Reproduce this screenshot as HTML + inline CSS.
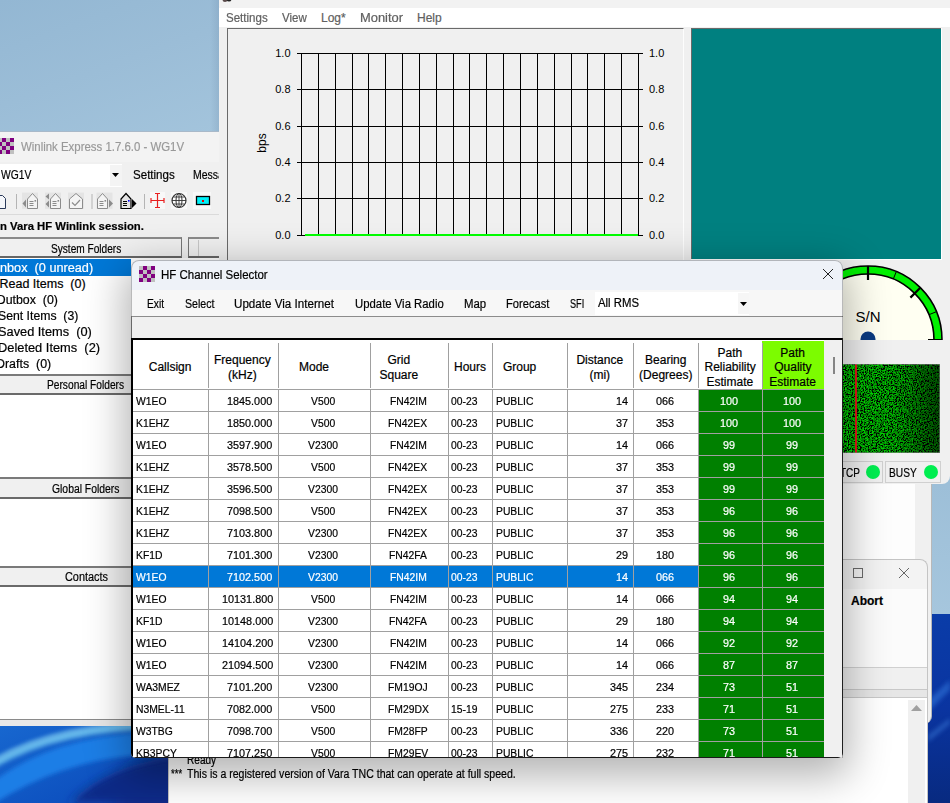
<!DOCTYPE html>
<html><head><meta charset="utf-8">
<style>
*{margin:0;padding:0;box-sizing:border-box}
html,body{width:950px;height:803px;overflow:hidden;background:#9cbfd8;font-family:"Liberation Sans",sans-serif;font-size:12px;color:#000}
body{position:relative}
.a{position:absolute}
.t{position:absolute;white-space:nowrap;-webkit-text-stroke:0.2px currentColor}
</style></head><body>
<div class="a" style="left:0;top:0;width:219px;height:132px;background:linear-gradient(160deg,#93b7d3 0%,#9bbdd7 50%,#a3c4dc 100%)"></div><div class="a" style="left:210px;top:0;width:9px;height:132px;background:linear-gradient(90deg,rgba(120,150,180,0),rgba(110,140,170,.25))"></div><div class="a" style="left:932px;top:484px;width:18px;height:132px;background:linear-gradient(180deg,#9dbfd8,#a6c6dd)"></div><svg class="a" style="left:0;top:720px" width="175" height="83" viewBox="0 720 175 83"><defs><filter id="b1" x="-50%" y="-50%" width="200%" height="200%"><feGaussianBlur stdDeviation="2"/></filter><filter id="b2" x="-50%" y="-50%" width="200%" height="200%"><feGaussianBlur stdDeviation="9"/></filter><filter id="b3l" x="-50%" y="-50%" width="200%" height="200%"><feGaussianBlur stdDeviation="4"/></filter><linearGradient id="bg1" x1="0" y1="0" x2="1" y2="1"><stop offset="0" stop-color="#1868d0"/><stop offset="1" stop-color="#0846b8"/></linearGradient></defs><rect x="0" y="720" width="175" height="83" fill="url(#bg1)"/><path d="M40 720 Q140 720 175 726 V720Z" fill="#0a3c9c" filter="url(#b1)"/><path d="M-10 784 Q60 729 180 732 V756 Q80 748 -10 806Z" fill="#1c7ee6" filter="url(#b1)"/><path d="M-10 766 Q60 723 180 726" stroke="#62b6ea" stroke-width="8" fill="none" filter="url(#b1)"/><path d="M-10 762 Q60 720 180 723" stroke="#8fd0f4" stroke-width="2" fill="none" opacity=".6" filter="url(#b1)"/><ellipse cx="185" cy="805" rx="70" ry="50" fill="#0a2c8a" filter="url(#b2)"/><path d="M70 803 Q105 764 180 756 V803Z" fill="#0a2a88" filter="url(#b3l)"/><path d="M70 803 Q105 764 180 756" stroke="#3a78d0" stroke-width="1.2" fill="none" opacity=".5" filter="url(#b1)"/></svg><svg class="a" style="left:928px;top:614px" width="22" height="189" viewBox="928 614 22 189"><defs><filter id="b3"><feGaussianBlur stdDeviation="2"/></filter></defs><defs><linearGradient id="rg" x1="0" y1="0" x2="0" y2="1"><stop offset="0" stop-color="#0a3ca8"/><stop offset=".5" stop-color="#0a34a0"/><stop offset="1" stop-color="#082a80"/></linearGradient></defs><rect x="928" y="614" width="22" height="189" fill="url(#rg)"/><path d="M928 700 L950 680 V690 L928 712Z" fill="#2a6ad0" opacity=".7" filter="url(#b3)"/><path d="M928 735 L950 718 V724 L928 742Z" fill="#3a7ad8" opacity=".5" filter="url(#b3)"/></svg><div class="a" style="left:600px;top:470px;width:332px;height:254px;background:#f0f0f0;border-right:1px solid #b8b8b8;border-radius:0 0 8px 0"></div><div class="a" style="left:843px;top:484px;width:72px;height:75px;background:#fdfdfd;"></div><div class="a" style="left:168px;top:559px;width:760px;height:244px;background:#f0f0f0;border-radius:0 8px 0 0;overflow:hidden"><div class="a" style="left:0px;top:0px;width:760px;height:30px;background:#f3f3f3;"></div><div class="a" style="left:685px;top:9px;width:10px;height:10px;background:transparent;border:1px solid #6a6a6a"></div><svg class="a" style="left:730px;top:8px" width="12" height="12"><path d="M1 1L11 11M11 1L1 11" stroke="#666" stroke-width="1"/></svg><div class="a" style="left:0px;top:30px;width:760px;height:78px;background:#fbfbfb;"></div><div class="t" style="left:683.00px;top:31.84px;font-size:12px;line-height:20px;color:#000;font-weight:bold;">Abort</div><div class="a" style="left:0px;top:108px;width:760px;height:1px;background:#d0d0d0;"></div><div class="a" style="left:0px;top:130px;width:760px;height:9px;background:#e6e6e6;border-top:1px solid #c8c8c8;border-bottom:1px solid #c8c8c8"></div><div class="a" style="left:0px;top:139px;width:760px;height:105px;background:#fff;"></div><div class="a" style="left:740px;top:141px;width:17px;height:103px;background:#f0f0f0;"></div><svg class="a" style="left:743px;top:145px" width="11" height="8"><path d="M0 7L5.5 1L11 7Z" fill="#a0a0a0"/></svg><div class="t" style="left:18.60px;top:191.04px;font-size:12px;line-height:20px;color:#000;transform:scaleX(0.8400);transform-origin:0 0;">Ready</div><div class="t" style="left:3.30px;top:204.74px;font-size:12px;line-height:20px;color:#000;transform:scaleX(0.7929);transform-origin:0 0;">***</div><div class="t" style="left:19.10px;top:204.74px;font-size:12px;line-height:20px;color:#000;transform:scaleX(0.8797);transform-origin:0 0;">This is a registered version of Vara TNC that can operate at full speed.</div></div><div class="a" style="left:168px;top:559px;width:760px;height:244px;border:1px solid #c4c4c4;border-bottom:none;border-radius:0 8px 0 0"></div><div class="a" style="left:0;top:131px;width:219px;height:595px;background:#f0f0f0;overflow:hidden"><div class="a" style="left:0px;top:0px;width:219px;height:1px;background:#a9b9c9;"></div><div class="a" style="left:0px;top:1px;width:219px;height:30px;background:#f3f3f3;"></div><div class="a" style="left:-2px;top:7px;width:4px;height:4px;background:#c0c0c0;"></div><div class="a" style="left:2px;top:7px;width:4px;height:4px;background:#800080;"></div><div class="a" style="left:6px;top:7px;width:4px;height:4px;background:#c0c0c0;"></div><div class="a" style="left:10px;top:7px;width:4px;height:4px;background:#800080;"></div><div class="a" style="left:-2px;top:11px;width:4px;height:4px;background:#800080;"></div><div class="a" style="left:2px;top:11px;width:4px;height:4px;background:#c0c0c0;"></div><div class="a" style="left:6px;top:11px;width:4px;height:4px;background:#800080;"></div><div class="a" style="left:10px;top:11px;width:4px;height:4px;background:#c0c0c0;"></div><div class="a" style="left:-2px;top:15px;width:4px;height:4px;background:#c0c0c0;"></div><div class="a" style="left:2px;top:15px;width:4px;height:4px;background:#800080;"></div><div class="a" style="left:6px;top:15px;width:4px;height:4px;background:#c0c0c0;"></div><div class="a" style="left:10px;top:15px;width:4px;height:4px;background:#800080;"></div><div class="a" style="left:-2px;top:19px;width:4px;height:4px;background:#800080;"></div><div class="a" style="left:2px;top:19px;width:4px;height:4px;background:#c0c0c0;"></div><div class="a" style="left:6px;top:19px;width:4px;height:4px;background:#800080;"></div><div class="a" style="left:10px;top:19px;width:4px;height:4px;background:#c0c0c0;"></div><div class="t" style="left:20.50px;top:5.67px;font-size:12.5px;line-height:20px;color:#999;transform:scaleX(0.9134);transform-origin:0 0;">Winlink Express 1.7.6.0 - WG1V</div><div class="a" style="left:0px;top:33px;width:122px;height:23px;background:#fff;"></div><div class="a" style="left:110px;top:34px;width:12px;height:21px;background:#f4f4f4;"></div><svg class="a" style="left:112px;top:42px" width="7" height="4"><path d="M0 0H7L3.5 4Z" fill="#000"/></svg><div class="t" style="left:0.50px;top:33.67px;font-size:12.5px;line-height:20px;color:#000;transform:scaleX(0.8243);transform-origin:0 0;">WG1V</div><div class="t" style="left:132.60px;top:33.84px;font-size:12px;line-height:20px;color:#000;transform:scaleX(0.9628);transform-origin:0 0;">Settings</div><div class="t" style="left:193.40px;top:33.84px;font-size:12px;line-height:20px;color:#000;transform:scaleX(0.8727);transform-origin:0 0;">Messages</div><div class="a" style="left:0px;top:83px;width:219px;height:1px;background:#dadada;"></div><svg class="a" style="left:0;top:55px" width="219" height="30" viewBox="0 186 219 30"><path d="M-6 195.5H2.5L5.5 198.5V208.5H-6Z" fill="#f4f6fa" stroke="#2a3a5a"/><path d="M16.5 194V209M92 194V209M144.5 194V209" stroke="#b4b4b4"/><rect x="22" y="192.6" width="16" height="16.2" fill="#e4e4e4"/><rect x="45" y="192.6" width="16" height="16.2" fill="#e4e4e4"/><rect x="68" y="192.6" width="16" height="16.2" fill="#e4e4e4"/><rect x="96.5" y="192.6" width="16" height="16.2" fill="#e4e4e4"/><path d="M27.5 208.5V199L32.5 193.5L37.5 199V208.5Z" fill="#f4f4f4" stroke="#8c8c8c" stroke-width="1"/><path d="M29.5 201.5h4M29.5 203.5h4M29.5 205.5h4" stroke="#8c8c8c"/><rect x="34.5" y="200" width="1.6" height="1.6" fill="#8c8c8c"/><path d="M22.5 203.5L26 199.5V207.5Z" fill="#8c8c8c"/><path d="M50.5 208.5V199L55.5 193.5L60.5 199V208.5Z" fill="#f4f4f4" stroke="#8c8c8c" stroke-width="1"/><path d="M52.5 201.5h4M52.5 203.5h4M52.5 205.5h4" stroke="#8c8c8c"/><rect x="57.5" y="200" width="1.6" height="1.6" fill="#8c8c8c"/><path d="M45.5 196.5L49 193.5V199.5Z M45.5 204L49 200.5V207.5Z" fill="#8c8c8c"/><path d="M69.5 208.5V199L76 193.5L82.5 199V208.5Z" fill="#f4f4f4" stroke="#8c8c8c"/><path d="M72 202.5L75 205.5L80 200" fill="none" stroke="#8c8c8c" stroke-width="1.2"/><path d="M97.5 208.5V199L102.5 193.5L107.5 199V208.5Z" fill="#f4f4f4" stroke="#8c8c8c" stroke-width="1"/><path d="M99.5 201.5h4M99.5 203.5h4M99.5 205.5h4" stroke="#8c8c8c"/><rect x="104.5" y="200" width="1.6" height="1.6" fill="#8c8c8c"/><path d="M113 203.5L109 199.5V207.5Z" fill="#8c8c8c"/><path d="M121 208.5V199L126.0 193.5L131 199V208.5Z" fill="#e4e4e4" stroke="#000" stroke-width="1.2"/><path d="M123 201.5h4M123 203.5h4M123 205.5h4" stroke="#000"/><rect x="128" y="200" width="1.6" height="1.6" fill="#0000ff"/><path d="M136.5 203.5L132 199V208Z" fill="#000"/><rect x="150" y="192" width="15" height="17" fill="#f8f8f8"/><path d="M157.5 193V208M150.5 200.5H164.5M155 193.5H160M155 207.5H160M151 198V203M164 198V203" stroke="#e82020" stroke-width="1.2" fill="none"/><rect x="171" y="192" width="16" height="17" fill="#f8f8f8"/><circle cx="179" cy="200.5" r="7" fill="#fff" stroke="#333" stroke-width="1.2"/><ellipse cx="179" cy="200.5" rx="3" ry="7" fill="none" stroke="#333"/><path d="M172 200.5H186M173.5 197H184.5M173.5 204H184.5M179 193.5V207.5" stroke="#333" stroke-width=".9"/><rect x="193" y="192" width="18" height="17" fill="#f8f8f8"/><rect x="196.5" y="196.5" width="13" height="8" fill="#00f0f8" stroke="#000" stroke-width="1.3"/><rect x="202" y="200" width="2" height="2" fill="#e00"/></svg><div class="t" style="left:0.00px;top:85.19px;font-size:11px;line-height:20px;color:#000;font-weight:bold;transform:scaleX(1.0286);transform-origin:0 0;">n Vara HF Winlink session.</div><div class="a" style="left:-2px;top:106px;width:184px;height:21px;background:#f0f0f0;border:1px solid #777;border-top:2px solid #8a8a8a;border-bottom:2px solid #666;border-left:none"></div><div class="t" style="left:51.00px;top:107.84px;font-size:12px;line-height:20px;color:#000;transform:scaleX(0.8434);transform-origin:0 0;">System Folders</div><div class="a" style="left:188px;top:106px;width:40px;height:21px;background:#f0f0f0;border:1px solid #777;border-top:2px solid #8a8a8a;border-bottom:2px solid #666"></div><div class="a" style="left:198px;top:109px;width:1px;height:16px;background:#c8c8c8;"></div><div class="a" style="left:0px;top:127px;width:219px;height:461px;background:#fff;"></div><div class="a" style="left:0px;top:128px;width:131px;height:17px;background:#0078d7;"></div><div class="t" style="left:0.00px;top:127.17px;font-size:12.5px;line-height:20px;color:#fff;transform:scaleX(1.0152);transform-origin:0 0;">nbox&nbsp; (0 unread)</div><div class="t" style="left:-0.50px;top:143.17px;font-size:12.5px;line-height:20px;color:#000;">Read Items&nbsp; (0)</div><div class="t" style="left:-4.00px;top:159.17px;font-size:12.5px;line-height:20px;color:#000;transform:scaleX(0.9905);transform-origin:0 0;">Outbox&nbsp; (0)</div><div class="t" style="left:-2.00px;top:175.17px;font-size:12.5px;line-height:20px;color:#000;transform:scaleX(0.9793);transform-origin:0 0;">Sent Items&nbsp; (3)</div><div class="t" style="left:-2.50px;top:191.17px;font-size:12.5px;line-height:20px;color:#000;transform:scaleX(1.0228);transform-origin:0 0;">Saved Items&nbsp; (0)</div><div class="t" style="left:-2.50px;top:207.17px;font-size:12.5px;line-height:20px;color:#000;transform:scaleX(1.0273);transform-origin:0 0;">Deleted Items&nbsp; (2)</div><div class="t" style="left:-4.50px;top:223.17px;font-size:12.5px;line-height:20px;color:#000;transform:scaleX(0.9946);transform-origin:0 0;">Drafts&nbsp; (0)</div><div class="a" style="left:-2px;top:243px;width:240px;height:21px;background:#f0f0f0;border-top:2px solid #7a7a7a;border-bottom:2px solid #6a6a6a"></div><div class="t" style="left:47.35px;top:243.54px;font-size:12px;line-height:20px;color:#000;transform:scaleX(0.8495);transform-origin:0 0;">Personal Folders</div><div class="a" style="left:-2px;top:346px;width:240px;height:22px;background:#f0f0f0;border-top:2px solid #7a7a7a;border-bottom:2px solid #6a6a6a"></div><div class="t" style="left:52.30px;top:348.04px;font-size:12px;line-height:20px;color:#000;transform:scaleX(0.8641);transform-origin:0 0;">Global Folders</div><div class="a" style="left:-2px;top:435px;width:240px;height:21px;background:#f0f0f0;border-top:2px solid #7a7a7a;border-bottom:2px solid #6a6a6a"></div><div class="t" style="left:64.65px;top:435.84px;font-size:12px;line-height:20px;color:#000;transform:scaleX(0.9085);transform-origin:0 0;">Contacts</div><div class="a" style="left:0px;top:588px;width:219px;height:1px;background:#8a8a8a;"></div><div class="a" style="left:0px;top:589px;width:219px;height:6px;background:#e8e8e8;"></div></div><div class="a" style="left:219px;top:0;width:731px;height:484px;background:#f0f0f0;border-radius:0 0 8px 0;overflow:hidden"><div class="a" style="left:0px;top:0px;width:731px;height:8px;background:#f2f2f2;"></div><div class="a" style="left:0px;top:8px;width:731px;height:19px;background:#fff;"></div><svg class="a" style="left:3px;top:-4px" width="10" height="7"><ellipse cx="3" cy="3.5" rx="2.5" ry="2.5" fill="#5a4a4a"/><ellipse cx="7" cy="3" rx="2.5" ry="2.5" fill="#222"/></svg><div class="t" style="left:7.40px;top:7.54px;font-size:12px;line-height:20px;color:#606060;transform:scaleX(0.9605);transform-origin:0 0;">Settings</div><div class="t" style="left:63.00px;top:7.54px;font-size:12px;line-height:20px;color:#606060;transform:scaleX(0.9615);transform-origin:0 0;">View</div><div class="t" style="left:102.00px;top:7.54px;font-size:12px;line-height:20px;color:#606060;">Log*</div><div class="t" style="left:141.00px;top:7.54px;font-size:12px;line-height:20px;color:#606060;transform:scaleX(1.0750);transform-origin:0 0;">Monitor</div><div class="t" style="left:198.00px;top:7.54px;font-size:12px;line-height:20px;color:#606060;">Help</div><div class="a" style="left:8px;top:28px;width:457px;height:232px;background:transparent;border-top:1px solid #6a6a6a;border-left:1px solid #6a6a6a;border-right:1px solid #fdfdfd"></div><svg class="a" style="left:0;top:0" width="731" height="260" font-family="Liberation Sans"><path d="M78 53.5H424" stroke="#000"/><text x="71.5" y="57" font-size="11" text-anchor="end">1.0</text><text x="430" y="57" font-size="11">1.0</text><path d="M78 89.5H424" stroke="#000"/><text x="71.5" y="93" font-size="11" text-anchor="end">0.8</text><text x="430" y="93" font-size="11">0.8</text><path d="M78 126.5H424" stroke="#000"/><text x="71.5" y="130" font-size="11" text-anchor="end">0.6</text><text x="430" y="130" font-size="11">0.6</text><path d="M78 162.5H424" stroke="#000"/><text x="71.5" y="166" font-size="11" text-anchor="end">0.4</text><text x="430" y="166" font-size="11">0.4</text><path d="M78 198.5H424" stroke="#000"/><text x="71.5" y="202" font-size="11" text-anchor="end">0.2</text><text x="430" y="202" font-size="11">0.2</text><path d="M78 235.5H424" stroke="#000"/><text x="71.5" y="239" font-size="11" text-anchor="end">0.0</text><text x="430" y="239" font-size="11">0.0</text><path d="M82.5 53V236" stroke="#000"/><path d="M99.5 53V236" stroke="#000"/><path d="M116.5 53V236" stroke="#000"/><path d="M133.5 53V236" stroke="#000"/><path d="M149.5 53V236" stroke="#000"/><path d="M166.5 53V236" stroke="#000"/><path d="M183.5 53V236" stroke="#000"/><path d="M200.5 53V236" stroke="#000"/><path d="M217.5 53V236" stroke="#000"/><path d="M234.5 53V236" stroke="#000"/><path d="M250.5 53V236" stroke="#000"/><path d="M267.5 53V236" stroke="#000"/><path d="M284.5 53V236" stroke="#000"/><path d="M301.5 53V236" stroke="#000"/><path d="M318.5 53V236" stroke="#000"/><path d="M335.5 53V236" stroke="#000"/><path d="M352.5 53V236" stroke="#000"/><path d="M368.5 53V236" stroke="#000"/><path d="M385.5 53V236" stroke="#000"/><path d="M402.5 53V236" stroke="#000"/><path d="M419.5 53V236" stroke="#000"/><path d="M86 235H419" stroke="#00ff00" stroke-width="2"/><text transform="translate(46.5,143) rotate(-90)" font-size="12" text-anchor="middle">bps</text></svg><div class="a" style="left:472px;top:28px;width:251px;height:232px;background:#008080;border-top:1px solid #6a6a6a;border-left:1px solid #6a6a6a"></div><div class="a" style="left:722px;top:28px;width:1px;height:232px;background:#fff;"></div><div class="a" style="left:472px;top:259px;width:251px;height:1px;background:#fff;"></div><div class="a" style="left:576px;top:262px;width:151px;height:78px;overflow:hidden"><svg width="151" height="78" font-family="Liberation Sans"><g transform="translate(73,78)"><circle r="74" fill="#fffff2"/><path d="M-74 0A74 74 0 0 1 74 0H66A66 66 0 0 0 -66 0Z" fill="#00f000" stroke="#000" stroke-width="1.6"/><path d="M0 -74V-60M52.3 -52.3L42.4 -42.4M74 0H60" stroke="#000" stroke-width="2.2"/><path d="M28.3 -68.4L25.3 -61M68.4 -28.3L61 -25.3" stroke="#000" stroke-width="1"/><circle cx="0" cy="-1" r="7.5" fill="#0a3a80"/></g><text x="73" y="60" font-size="15" text-anchor="middle">S/N</text></svg></div><svg class="a" style="left:620px;top:364px" width="101" height="89"><defs><filter id="nz" x="0" y="0" width="100%" height="100%"><feTurbulence type="fractalNoise" baseFrequency="0.75" numOctaves="2" seed="4"/><feColorMatrix type="matrix" values="0 0 0 0 0  2.6 0 0 0 -1.0  0 0 0 0 0  0 0 0 0 1"/></filter><linearGradient id="wg" x1="0" x2="1"><stop offset="0" stop-color="#000" stop-opacity="0"/><stop offset=".55" stop-color="#000" stop-opacity=".15"/><stop offset="1" stop-color="#000" stop-opacity=".6"/></linearGradient></defs><rect width="101" height="89" fill="#000"/><rect width="101" height="89" filter="url(#nz)"/><rect width="101" height="89" fill="url(#wg)"/><rect x="16" y="0" width="2" height="89" fill="#e01818"/><rect x="0" y="0" width="101" height="89" fill="none" stroke="#909090"/></svg><div class="a" style="left:611px;top:461px;width:53px;height:22px;background:transparent;border:1px solid #d0d0d0"></div><div class="t" style="left:620.50px;top:462.84px;font-size:12px;line-height:20px;color:#000;transform:scaleX(0.8333);transform-origin:0 0;">TCP</div><div class="a" style="left:647px;top:465px;width:14px;height:14px;border-radius:50%;background:#00ee50"></div><div class="a" style="left:666px;top:461px;width:56px;height:22px;background:transparent;border:1px solid #d0d0d0"></div><div class="t" style="left:670.00px;top:462.84px;font-size:12px;line-height:20px;color:#000;transform:scaleX(0.8485);transform-origin:0 0;">BUSY</div><div class="a" style="left:705px;top:465px;width:14px;height:14px;border-radius:50%;background:#00ee50"></div></div><div class="a" style="left:131px;top:260px;width:712px;height:498px;border-radius:8px 8px 5px 5px;box-shadow:0 12px 40px 6px rgba(0,0,0,.30)"></div><div class="a" style="left:131px;top:260px;width:712px;height:498px;background:#f0f0f0;border-radius:8px 8px 5px 5px;overflow:hidden"><div class="a" style="left:0px;top:0px;width:712px;height:30px;background:#eef2f8;"></div><div class="a" style="left:0px;top:30px;width:712px;height:27px;background:#f7f7f7;"></div><div class="a" style="left:8px;top:6px;width:4px;height:4px;background:#c0c0c0;"></div><div class="a" style="left:12px;top:6px;width:4px;height:4px;background:#800080;"></div><div class="a" style="left:16px;top:6px;width:4px;height:4px;background:#c0c0c0;"></div><div class="a" style="left:20px;top:6px;width:4px;height:4px;background:#800080;"></div><div class="a" style="left:8px;top:10px;width:4px;height:4px;background:#800080;"></div><div class="a" style="left:12px;top:10px;width:4px;height:4px;background:#c0c0c0;"></div><div class="a" style="left:16px;top:10px;width:4px;height:4px;background:#800080;"></div><div class="a" style="left:20px;top:10px;width:4px;height:4px;background:#c0c0c0;"></div><div class="a" style="left:8px;top:14px;width:4px;height:4px;background:#c0c0c0;"></div><div class="a" style="left:12px;top:14px;width:4px;height:4px;background:#800080;"></div><div class="a" style="left:16px;top:14px;width:4px;height:4px;background:#c0c0c0;"></div><div class="a" style="left:20px;top:14px;width:4px;height:4px;background:#800080;"></div><div class="a" style="left:8px;top:18px;width:4px;height:4px;background:#800080;"></div><div class="a" style="left:12px;top:18px;width:4px;height:4px;background:#c0c0c0;"></div><div class="a" style="left:16px;top:18px;width:4px;height:4px;background:#800080;"></div><div class="a" style="left:20px;top:18px;width:4px;height:4px;background:#c0c0c0;"></div><div class="t" style="left:29.70px;top:4.64px;font-size:12px;line-height:20px;color:#000;transform:scaleX(0.9577);transform-origin:0 0;">HF Channel Selector</div><svg class="a" style="left:691px;top:8px" width="12" height="12"><path d="M1 1L11 11M11 1L1 11" stroke="#222" stroke-width="1"/></svg><div class="t" style="left:15.60px;top:33.74px;font-size:12px;line-height:20px;color:#000;transform:scaleX(0.8524);transform-origin:0 0;">Exit</div><div class="t" style="left:53.50px;top:33.74px;font-size:12px;line-height:20px;color:#000;transform:scaleX(0.8853);transform-origin:0 0;">Select</div><div class="t" style="left:103.40px;top:33.74px;font-size:12px;line-height:20px;color:#000;transform:scaleX(0.9683);transform-origin:0 0;">Update Via Internet</div><div class="t" style="left:223.70px;top:33.74px;font-size:12px;line-height:20px;color:#000;transform:scaleX(0.9457);transform-origin:0 0;">Update Via Radio</div><div class="t" style="left:332.50px;top:33.74px;font-size:12px;line-height:20px;color:#000;transform:scaleX(0.9500);transform-origin:0 0;">Map</div><div class="t" style="left:375.00px;top:33.74px;font-size:12px;line-height:20px;color:#000;transform:scaleX(0.9277);transform-origin:0 0;">Forecast</div><div class="t" style="left:438.50px;top:33.74px;font-size:12px;line-height:20px;color:#000;transform:scaleX(0.7632);transform-origin:0 0;">SFI</div><div class="a" style="left:464px;top:32px;width:154px;height:23px;background:#fff;"></div><div class="a" style="left:607px;top:33px;width:11px;height:21px;background:#f6f6f6;"></div><svg class="a" style="left:609px;top:42px" width="7" height="4"><path d="M0 0H7L3.5 4Z" fill="#000"/></svg><div class="t" style="left:467.00px;top:32.64px;font-size:12px;line-height:20px;color:#000;transform:scaleX(0.9465);transform-origin:0 0;">All RMS</div><div class="a" style="left:0px;top:56px;width:712px;height:1px;background:#8c8c8c;"></div><div class="a" style="left:0px;top:56px;width:1px;height:24px;background:#8c8c8c;"></div><div class="a" style="left:0px;top:78px;width:712px;height:2px;background:#000;"></div><div class="a" style="left:0px;top:80px;width:693px;height:418px;background:#fff;"></div><div class="a" style="left:0px;top:80px;width:2px;height:418px;background:#000;"></div><div class="t" style="left:17.75px;top:97.24px;font-size:12px;line-height:20px;color:#000;">Callsign</div><div class="a" style="left:77px;top:83px;width:1px;height:45px;background:#a0a0a0;"></div><div class="t" style="left:83.00px;top:89.94px;font-size:12px;line-height:20px;color:#000;">Frequency</div><div class="t" style="left:97.00px;top:104.54px;font-size:12px;line-height:20px;color:#000;">(kHz)</div><div class="a" style="left:147px;top:83px;width:1px;height:45px;background:#a0a0a0;"></div><div class="t" style="left:168.00px;top:97.24px;font-size:12px;line-height:20px;color:#000;">Mode</div><div class="a" style="left:239px;top:83px;width:1px;height:45px;background:#a0a0a0;"></div><div class="t" style="left:256.50px;top:89.94px;font-size:12px;line-height:20px;color:#000;">Grid</div><div class="t" style="left:248.50px;top:104.54px;font-size:12px;line-height:20px;color:#000;">Square</div><div class="a" style="left:317px;top:83px;width:1px;height:45px;background:#a0a0a0;"></div><div class="t" style="left:323.00px;top:97.24px;font-size:12px;line-height:20px;color:#000;">Hours</div><div class="a" style="left:361px;top:83px;width:1px;height:45px;background:#a0a0a0;"></div><div class="t" style="left:371.90px;top:97.24px;font-size:12px;line-height:20px;color:#000;">Group</div><div class="a" style="left:436px;top:83px;width:1px;height:45px;background:#a0a0a0;"></div><div class="t" style="left:445.45px;top:89.94px;font-size:12px;line-height:20px;color:#000;">Distance</div><div class="t" style="left:458.45px;top:104.54px;font-size:12px;line-height:20px;color:#000;">(mi)</div><div class="a" style="left:502px;top:83px;width:1px;height:45px;background:#a0a0a0;"></div><div class="t" style="left:514.05px;top:89.94px;font-size:12px;line-height:20px;color:#000;">Bearing</div><div class="t" style="left:508.05px;top:104.54px;font-size:12px;line-height:20px;color:#000;">(Degrees)</div><div class="a" style="left:567px;top:83px;width:1px;height:45px;background:#a0a0a0;"></div><div class="t" style="left:586.50px;top:82.64px;font-size:12px;line-height:20px;color:#000;">Path</div><div class="t" style="left:573.50px;top:97.24px;font-size:12px;line-height:20px;color:#000;">Reliability</div><div class="t" style="left:575.50px;top:111.84px;font-size:12px;line-height:20px;color:#000;">Estimate</div><div class="a" style="left:631.0px;top:81px;width:62.0px;height:48px;background:#7cfc00;"></div><div class="a" style="left:631px;top:83px;width:1px;height:45px;background:#a0a0a0;"></div><div class="t" style="left:649.25px;top:82.64px;font-size:12px;line-height:20px;color:#000;">Path</div><div class="t" style="left:643.25px;top:97.24px;font-size:12px;line-height:20px;color:#000;">Quality</div><div class="t" style="left:638.25px;top:111.84px;font-size:12px;line-height:20px;color:#000;">Estimate</div><div class="a" style="left:2px;top:129px;width:691px;height:1px;background:#a0a0a0;"></div><div class="a" style="left:567.5px;top:130px;width:125.5px;height:21px;background:#008000;"></div><div class="t" style="left:5.30px;top:131.19px;font-size:11px;line-height:20px;color:#000;transform:scaleX(0.9400);transform-origin:0 0;">W1EO</div><div class="t" style="left:96.49px;top:131.19px;font-size:11px;line-height:20px;color:#000;transform:scaleX(0.9850);transform-origin:0 0;">1845.000</div><div class="t" style="left:179.98px;top:131.19px;font-size:11px;line-height:20px;color:#000;transform:scaleX(0.9400);transform-origin:0 0;">V500</div><div class="t" style="left:258.87px;top:131.19px;font-size:11px;line-height:20px;color:#000;transform:scaleX(0.9400);transform-origin:0 0;">FN42IM</div><div class="t" style="left:319.80px;top:131.19px;font-size:11px;line-height:20px;color:#000;transform:scaleX(0.9400);transform-origin:0 0;">00-23</div><div class="t" style="left:364.80px;top:131.19px;font-size:11px;line-height:20px;color:#000;transform:scaleX(0.9400);transform-origin:0 0;">PUBLIC</div><div class="t" style="left:485.08px;top:131.19px;font-size:11px;line-height:20px;color:#000;transform:scaleX(0.9850);transform-origin:0 0;">14</div><div class="t" style="left:524.88px;top:131.19px;font-size:11px;line-height:20px;color:#000;transform:scaleX(0.9850);transform-origin:0 0;">066</div><div class="t" style="left:589.34px;top:131.19px;font-size:11px;line-height:20px;color:#fff;transform:scaleX(0.9850);transform-origin:0 0;">100</div><div class="t" style="left:652.09px;top:131.19px;font-size:11px;line-height:20px;color:#fff;transform:scaleX(0.9850);transform-origin:0 0;">100</div><div class="a" style="left:77px;top:129px;width:1px;height:22px;background:#a0a0a0;"></div><div class="a" style="left:147px;top:129px;width:1px;height:22px;background:#a0a0a0;"></div><div class="a" style="left:239px;top:129px;width:1px;height:22px;background:#a0a0a0;"></div><div class="a" style="left:317px;top:129px;width:1px;height:22px;background:#a0a0a0;"></div><div class="a" style="left:361px;top:129px;width:1px;height:22px;background:#a0a0a0;"></div><div class="a" style="left:436px;top:129px;width:1px;height:22px;background:#a0a0a0;"></div><div class="a" style="left:502px;top:129px;width:1px;height:22px;background:#a0a0a0;"></div><div class="a" style="left:567px;top:129px;width:1px;height:22px;background:#a0a0a0;"></div><div class="a" style="left:631px;top:129px;width:1px;height:22px;background:#a0a0a0;"></div><div class="a" style="left:2px;top:151px;width:691px;height:1px;background:#a0a0a0;"></div><div class="a" style="left:567.5px;top:152px;width:125.5px;height:21px;background:#008000;"></div><div class="t" style="left:5.30px;top:153.19px;font-size:11px;line-height:20px;color:#000;transform:scaleX(0.9400);transform-origin:0 0;">K1EHZ</div><div class="t" style="left:96.49px;top:153.19px;font-size:11px;line-height:20px;color:#000;transform:scaleX(0.9850);transform-origin:0 0;">1850.000</div><div class="t" style="left:179.98px;top:153.19px;font-size:11px;line-height:20px;color:#000;transform:scaleX(0.9400);transform-origin:0 0;">V500</div><div class="t" style="left:257.46px;top:153.19px;font-size:11px;line-height:20px;color:#000;transform:scaleX(0.9400);transform-origin:0 0;">FN42EX</div><div class="t" style="left:319.80px;top:153.19px;font-size:11px;line-height:20px;color:#000;transform:scaleX(0.9400);transform-origin:0 0;">00-23</div><div class="t" style="left:364.80px;top:153.19px;font-size:11px;line-height:20px;color:#000;transform:scaleX(0.9400);transform-origin:0 0;">PUBLIC</div><div class="t" style="left:485.08px;top:153.19px;font-size:11px;line-height:20px;color:#000;transform:scaleX(0.9850);transform-origin:0 0;">37</div><div class="t" style="left:524.88px;top:153.19px;font-size:11px;line-height:20px;color:#000;transform:scaleX(0.9850);transform-origin:0 0;">353</div><div class="t" style="left:589.34px;top:153.19px;font-size:11px;line-height:20px;color:#fff;transform:scaleX(0.9850);transform-origin:0 0;">100</div><div class="t" style="left:652.09px;top:153.19px;font-size:11px;line-height:20px;color:#fff;transform:scaleX(0.9850);transform-origin:0 0;">100</div><div class="a" style="left:77px;top:151px;width:1px;height:22px;background:#a0a0a0;"></div><div class="a" style="left:147px;top:151px;width:1px;height:22px;background:#a0a0a0;"></div><div class="a" style="left:239px;top:151px;width:1px;height:22px;background:#a0a0a0;"></div><div class="a" style="left:317px;top:151px;width:1px;height:22px;background:#a0a0a0;"></div><div class="a" style="left:361px;top:151px;width:1px;height:22px;background:#a0a0a0;"></div><div class="a" style="left:436px;top:151px;width:1px;height:22px;background:#a0a0a0;"></div><div class="a" style="left:502px;top:151px;width:1px;height:22px;background:#a0a0a0;"></div><div class="a" style="left:567px;top:151px;width:1px;height:22px;background:#a0a0a0;"></div><div class="a" style="left:631px;top:151px;width:1px;height:22px;background:#a0a0a0;"></div><div class="a" style="left:2px;top:173px;width:691px;height:1px;background:#a0a0a0;"></div><div class="a" style="left:567.5px;top:174px;width:125.5px;height:21px;background:#008000;"></div><div class="t" style="left:5.30px;top:175.19px;font-size:11px;line-height:20px;color:#000;transform:scaleX(0.9400);transform-origin:0 0;">W1EO</div><div class="t" style="left:96.49px;top:175.19px;font-size:11px;line-height:20px;color:#000;transform:scaleX(0.9850);transform-origin:0 0;">3597.900</div><div class="t" style="left:177.16px;top:175.19px;font-size:11px;line-height:20px;color:#000;transform:scaleX(0.9400);transform-origin:0 0;">V2300</div><div class="t" style="left:258.87px;top:175.19px;font-size:11px;line-height:20px;color:#000;transform:scaleX(0.9400);transform-origin:0 0;">FN42IM</div><div class="t" style="left:319.80px;top:175.19px;font-size:11px;line-height:20px;color:#000;transform:scaleX(0.9400);transform-origin:0 0;">00-23</div><div class="t" style="left:364.80px;top:175.19px;font-size:11px;line-height:20px;color:#000;transform:scaleX(0.9400);transform-origin:0 0;">PUBLIC</div><div class="t" style="left:485.08px;top:175.19px;font-size:11px;line-height:20px;color:#000;transform:scaleX(0.9850);transform-origin:0 0;">14</div><div class="t" style="left:524.88px;top:175.19px;font-size:11px;line-height:20px;color:#000;transform:scaleX(0.9850);transform-origin:0 0;">066</div><div class="t" style="left:592.29px;top:175.19px;font-size:11px;line-height:20px;color:#fff;transform:scaleX(0.9850);transform-origin:0 0;">99</div><div class="t" style="left:655.04px;top:175.19px;font-size:11px;line-height:20px;color:#fff;transform:scaleX(0.9850);transform-origin:0 0;">99</div><div class="a" style="left:77px;top:173px;width:1px;height:22px;background:#a0a0a0;"></div><div class="a" style="left:147px;top:173px;width:1px;height:22px;background:#a0a0a0;"></div><div class="a" style="left:239px;top:173px;width:1px;height:22px;background:#a0a0a0;"></div><div class="a" style="left:317px;top:173px;width:1px;height:22px;background:#a0a0a0;"></div><div class="a" style="left:361px;top:173px;width:1px;height:22px;background:#a0a0a0;"></div><div class="a" style="left:436px;top:173px;width:1px;height:22px;background:#a0a0a0;"></div><div class="a" style="left:502px;top:173px;width:1px;height:22px;background:#a0a0a0;"></div><div class="a" style="left:567px;top:173px;width:1px;height:22px;background:#a0a0a0;"></div><div class="a" style="left:631px;top:173px;width:1px;height:22px;background:#a0a0a0;"></div><div class="a" style="left:2px;top:195px;width:691px;height:1px;background:#a0a0a0;"></div><div class="a" style="left:567.5px;top:196px;width:125.5px;height:21px;background:#008000;"></div><div class="t" style="left:5.30px;top:197.19px;font-size:11px;line-height:20px;color:#000;transform:scaleX(0.9400);transform-origin:0 0;">K1EHZ</div><div class="t" style="left:96.49px;top:197.19px;font-size:11px;line-height:20px;color:#000;transform:scaleX(0.9850);transform-origin:0 0;">3578.500</div><div class="t" style="left:179.98px;top:197.19px;font-size:11px;line-height:20px;color:#000;transform:scaleX(0.9400);transform-origin:0 0;">V500</div><div class="t" style="left:257.46px;top:197.19px;font-size:11px;line-height:20px;color:#000;transform:scaleX(0.9400);transform-origin:0 0;">FN42EX</div><div class="t" style="left:319.80px;top:197.19px;font-size:11px;line-height:20px;color:#000;transform:scaleX(0.9400);transform-origin:0 0;">00-23</div><div class="t" style="left:364.80px;top:197.19px;font-size:11px;line-height:20px;color:#000;transform:scaleX(0.9400);transform-origin:0 0;">PUBLIC</div><div class="t" style="left:485.08px;top:197.19px;font-size:11px;line-height:20px;color:#000;transform:scaleX(0.9850);transform-origin:0 0;">37</div><div class="t" style="left:524.88px;top:197.19px;font-size:11px;line-height:20px;color:#000;transform:scaleX(0.9850);transform-origin:0 0;">353</div><div class="t" style="left:592.29px;top:197.19px;font-size:11px;line-height:20px;color:#fff;transform:scaleX(0.9850);transform-origin:0 0;">99</div><div class="t" style="left:655.04px;top:197.19px;font-size:11px;line-height:20px;color:#fff;transform:scaleX(0.9850);transform-origin:0 0;">99</div><div class="a" style="left:77px;top:195px;width:1px;height:22px;background:#a0a0a0;"></div><div class="a" style="left:147px;top:195px;width:1px;height:22px;background:#a0a0a0;"></div><div class="a" style="left:239px;top:195px;width:1px;height:22px;background:#a0a0a0;"></div><div class="a" style="left:317px;top:195px;width:1px;height:22px;background:#a0a0a0;"></div><div class="a" style="left:361px;top:195px;width:1px;height:22px;background:#a0a0a0;"></div><div class="a" style="left:436px;top:195px;width:1px;height:22px;background:#a0a0a0;"></div><div class="a" style="left:502px;top:195px;width:1px;height:22px;background:#a0a0a0;"></div><div class="a" style="left:567px;top:195px;width:1px;height:22px;background:#a0a0a0;"></div><div class="a" style="left:631px;top:195px;width:1px;height:22px;background:#a0a0a0;"></div><div class="a" style="left:2px;top:217px;width:691px;height:1px;background:#a0a0a0;"></div><div class="a" style="left:567.5px;top:218px;width:125.5px;height:21px;background:#008000;"></div><div class="t" style="left:5.30px;top:219.19px;font-size:11px;line-height:20px;color:#000;transform:scaleX(0.9400);transform-origin:0 0;">K1EHZ</div><div class="t" style="left:96.49px;top:219.19px;font-size:11px;line-height:20px;color:#000;transform:scaleX(0.9850);transform-origin:0 0;">3596.500</div><div class="t" style="left:177.16px;top:219.19px;font-size:11px;line-height:20px;color:#000;transform:scaleX(0.9400);transform-origin:0 0;">V2300</div><div class="t" style="left:257.46px;top:219.19px;font-size:11px;line-height:20px;color:#000;transform:scaleX(0.9400);transform-origin:0 0;">FN42EX</div><div class="t" style="left:319.80px;top:219.19px;font-size:11px;line-height:20px;color:#000;transform:scaleX(0.9400);transform-origin:0 0;">00-23</div><div class="t" style="left:364.80px;top:219.19px;font-size:11px;line-height:20px;color:#000;transform:scaleX(0.9400);transform-origin:0 0;">PUBLIC</div><div class="t" style="left:485.08px;top:219.19px;font-size:11px;line-height:20px;color:#000;transform:scaleX(0.9850);transform-origin:0 0;">37</div><div class="t" style="left:524.88px;top:219.19px;font-size:11px;line-height:20px;color:#000;transform:scaleX(0.9850);transform-origin:0 0;">353</div><div class="t" style="left:592.29px;top:219.19px;font-size:11px;line-height:20px;color:#fff;transform:scaleX(0.9850);transform-origin:0 0;">99</div><div class="t" style="left:655.04px;top:219.19px;font-size:11px;line-height:20px;color:#fff;transform:scaleX(0.9850);transform-origin:0 0;">99</div><div class="a" style="left:77px;top:217px;width:1px;height:22px;background:#a0a0a0;"></div><div class="a" style="left:147px;top:217px;width:1px;height:22px;background:#a0a0a0;"></div><div class="a" style="left:239px;top:217px;width:1px;height:22px;background:#a0a0a0;"></div><div class="a" style="left:317px;top:217px;width:1px;height:22px;background:#a0a0a0;"></div><div class="a" style="left:361px;top:217px;width:1px;height:22px;background:#a0a0a0;"></div><div class="a" style="left:436px;top:217px;width:1px;height:22px;background:#a0a0a0;"></div><div class="a" style="left:502px;top:217px;width:1px;height:22px;background:#a0a0a0;"></div><div class="a" style="left:567px;top:217px;width:1px;height:22px;background:#a0a0a0;"></div><div class="a" style="left:631px;top:217px;width:1px;height:22px;background:#a0a0a0;"></div><div class="a" style="left:2px;top:239px;width:691px;height:1px;background:#a0a0a0;"></div><div class="a" style="left:567.5px;top:240px;width:125.5px;height:21px;background:#008000;"></div><div class="t" style="left:5.30px;top:241.19px;font-size:11px;line-height:20px;color:#000;transform:scaleX(0.9400);transform-origin:0 0;">K1EHZ</div><div class="t" style="left:96.49px;top:241.19px;font-size:11px;line-height:20px;color:#000;transform:scaleX(0.9850);transform-origin:0 0;">7098.500</div><div class="t" style="left:179.98px;top:241.19px;font-size:11px;line-height:20px;color:#000;transform:scaleX(0.9400);transform-origin:0 0;">V500</div><div class="t" style="left:257.46px;top:241.19px;font-size:11px;line-height:20px;color:#000;transform:scaleX(0.9400);transform-origin:0 0;">FN42EX</div><div class="t" style="left:319.80px;top:241.19px;font-size:11px;line-height:20px;color:#000;transform:scaleX(0.9400);transform-origin:0 0;">00-23</div><div class="t" style="left:364.80px;top:241.19px;font-size:11px;line-height:20px;color:#000;transform:scaleX(0.9400);transform-origin:0 0;">PUBLIC</div><div class="t" style="left:485.08px;top:241.19px;font-size:11px;line-height:20px;color:#000;transform:scaleX(0.9850);transform-origin:0 0;">37</div><div class="t" style="left:524.88px;top:241.19px;font-size:11px;line-height:20px;color:#000;transform:scaleX(0.9850);transform-origin:0 0;">353</div><div class="t" style="left:592.29px;top:241.19px;font-size:11px;line-height:20px;color:#fff;transform:scaleX(0.9850);transform-origin:0 0;">96</div><div class="t" style="left:655.04px;top:241.19px;font-size:11px;line-height:20px;color:#fff;transform:scaleX(0.9850);transform-origin:0 0;">96</div><div class="a" style="left:77px;top:239px;width:1px;height:22px;background:#a0a0a0;"></div><div class="a" style="left:147px;top:239px;width:1px;height:22px;background:#a0a0a0;"></div><div class="a" style="left:239px;top:239px;width:1px;height:22px;background:#a0a0a0;"></div><div class="a" style="left:317px;top:239px;width:1px;height:22px;background:#a0a0a0;"></div><div class="a" style="left:361px;top:239px;width:1px;height:22px;background:#a0a0a0;"></div><div class="a" style="left:436px;top:239px;width:1px;height:22px;background:#a0a0a0;"></div><div class="a" style="left:502px;top:239px;width:1px;height:22px;background:#a0a0a0;"></div><div class="a" style="left:567px;top:239px;width:1px;height:22px;background:#a0a0a0;"></div><div class="a" style="left:631px;top:239px;width:1px;height:22px;background:#a0a0a0;"></div><div class="a" style="left:2px;top:261px;width:691px;height:1px;background:#a0a0a0;"></div><div class="a" style="left:567.5px;top:262px;width:125.5px;height:21px;background:#008000;"></div><div class="t" style="left:5.30px;top:263.19px;font-size:11px;line-height:20px;color:#000;transform:scaleX(0.9400);transform-origin:0 0;">K1EHZ</div><div class="t" style="left:96.49px;top:263.19px;font-size:11px;line-height:20px;color:#000;transform:scaleX(0.9850);transform-origin:0 0;">7103.800</div><div class="t" style="left:177.16px;top:263.19px;font-size:11px;line-height:20px;color:#000;transform:scaleX(0.9400);transform-origin:0 0;">V2300</div><div class="t" style="left:257.46px;top:263.19px;font-size:11px;line-height:20px;color:#000;transform:scaleX(0.9400);transform-origin:0 0;">FN42EX</div><div class="t" style="left:319.80px;top:263.19px;font-size:11px;line-height:20px;color:#000;transform:scaleX(0.9400);transform-origin:0 0;">00-23</div><div class="t" style="left:364.80px;top:263.19px;font-size:11px;line-height:20px;color:#000;transform:scaleX(0.9400);transform-origin:0 0;">PUBLIC</div><div class="t" style="left:485.08px;top:263.19px;font-size:11px;line-height:20px;color:#000;transform:scaleX(0.9850);transform-origin:0 0;">37</div><div class="t" style="left:524.88px;top:263.19px;font-size:11px;line-height:20px;color:#000;transform:scaleX(0.9850);transform-origin:0 0;">353</div><div class="t" style="left:592.29px;top:263.19px;font-size:11px;line-height:20px;color:#fff;transform:scaleX(0.9850);transform-origin:0 0;">96</div><div class="t" style="left:655.04px;top:263.19px;font-size:11px;line-height:20px;color:#fff;transform:scaleX(0.9850);transform-origin:0 0;">96</div><div class="a" style="left:77px;top:261px;width:1px;height:22px;background:#a0a0a0;"></div><div class="a" style="left:147px;top:261px;width:1px;height:22px;background:#a0a0a0;"></div><div class="a" style="left:239px;top:261px;width:1px;height:22px;background:#a0a0a0;"></div><div class="a" style="left:317px;top:261px;width:1px;height:22px;background:#a0a0a0;"></div><div class="a" style="left:361px;top:261px;width:1px;height:22px;background:#a0a0a0;"></div><div class="a" style="left:436px;top:261px;width:1px;height:22px;background:#a0a0a0;"></div><div class="a" style="left:502px;top:261px;width:1px;height:22px;background:#a0a0a0;"></div><div class="a" style="left:567px;top:261px;width:1px;height:22px;background:#a0a0a0;"></div><div class="a" style="left:631px;top:261px;width:1px;height:22px;background:#a0a0a0;"></div><div class="a" style="left:2px;top:283px;width:691px;height:1px;background:#a0a0a0;"></div><div class="a" style="left:567.5px;top:284px;width:125.5px;height:21px;background:#008000;"></div><div class="t" style="left:5.30px;top:285.19px;font-size:11px;line-height:20px;color:#000;transform:scaleX(0.9400);transform-origin:0 0;">KF1D</div><div class="t" style="left:96.49px;top:285.19px;font-size:11px;line-height:20px;color:#000;transform:scaleX(0.9850);transform-origin:0 0;">7101.300</div><div class="t" style="left:177.16px;top:285.19px;font-size:11px;line-height:20px;color:#000;transform:scaleX(0.9400);transform-origin:0 0;">V2300</div><div class="t" style="left:257.93px;top:285.19px;font-size:11px;line-height:20px;color:#000;transform:scaleX(0.9400);transform-origin:0 0;">FN42FA</div><div class="t" style="left:319.80px;top:285.19px;font-size:11px;line-height:20px;color:#000;transform:scaleX(0.9400);transform-origin:0 0;">00-23</div><div class="t" style="left:364.80px;top:285.19px;font-size:11px;line-height:20px;color:#000;transform:scaleX(0.9400);transform-origin:0 0;">PUBLIC</div><div class="t" style="left:485.08px;top:285.19px;font-size:11px;line-height:20px;color:#000;transform:scaleX(0.9850);transform-origin:0 0;">29</div><div class="t" style="left:524.88px;top:285.19px;font-size:11px;line-height:20px;color:#000;transform:scaleX(0.9850);transform-origin:0 0;">180</div><div class="t" style="left:592.29px;top:285.19px;font-size:11px;line-height:20px;color:#fff;transform:scaleX(0.9850);transform-origin:0 0;">96</div><div class="t" style="left:655.04px;top:285.19px;font-size:11px;line-height:20px;color:#fff;transform:scaleX(0.9850);transform-origin:0 0;">96</div><div class="a" style="left:77px;top:283px;width:1px;height:22px;background:#a0a0a0;"></div><div class="a" style="left:147px;top:283px;width:1px;height:22px;background:#a0a0a0;"></div><div class="a" style="left:239px;top:283px;width:1px;height:22px;background:#a0a0a0;"></div><div class="a" style="left:317px;top:283px;width:1px;height:22px;background:#a0a0a0;"></div><div class="a" style="left:361px;top:283px;width:1px;height:22px;background:#a0a0a0;"></div><div class="a" style="left:436px;top:283px;width:1px;height:22px;background:#a0a0a0;"></div><div class="a" style="left:502px;top:283px;width:1px;height:22px;background:#a0a0a0;"></div><div class="a" style="left:567px;top:283px;width:1px;height:22px;background:#a0a0a0;"></div><div class="a" style="left:631px;top:283px;width:1px;height:22px;background:#a0a0a0;"></div><div class="a" style="left:2px;top:305px;width:691px;height:1px;background:#a0a0a0;"></div><div class="a" style="left:2px;top:306px;width:565.5px;height:21px;background:#0078d7;"></div><div class="a" style="left:567.5px;top:306px;width:125.5px;height:21px;background:#008000;"></div><div class="t" style="left:5.30px;top:307.19px;font-size:11px;line-height:20px;color:#fff;transform:scaleX(0.9400);transform-origin:0 0;">W1EO</div><div class="t" style="left:96.49px;top:307.19px;font-size:11px;line-height:20px;color:#fff;transform:scaleX(0.9850);transform-origin:0 0;">7102.500</div><div class="t" style="left:177.16px;top:307.19px;font-size:11px;line-height:20px;color:#fff;transform:scaleX(0.9400);transform-origin:0 0;">V2300</div><div class="t" style="left:258.87px;top:307.19px;font-size:11px;line-height:20px;color:#fff;transform:scaleX(0.9400);transform-origin:0 0;">FN42IM</div><div class="t" style="left:319.80px;top:307.19px;font-size:11px;line-height:20px;color:#fff;transform:scaleX(0.9400);transform-origin:0 0;">00-23</div><div class="t" style="left:364.80px;top:307.19px;font-size:11px;line-height:20px;color:#fff;transform:scaleX(0.9400);transform-origin:0 0;">PUBLIC</div><div class="t" style="left:485.08px;top:307.19px;font-size:11px;line-height:20px;color:#fff;transform:scaleX(0.9850);transform-origin:0 0;">14</div><div class="t" style="left:524.88px;top:307.19px;font-size:11px;line-height:20px;color:#fff;transform:scaleX(0.9850);transform-origin:0 0;">066</div><div class="t" style="left:592.29px;top:307.19px;font-size:11px;line-height:20px;color:#fff;transform:scaleX(0.9850);transform-origin:0 0;">96</div><div class="t" style="left:655.04px;top:307.19px;font-size:11px;line-height:20px;color:#fff;transform:scaleX(0.9850);transform-origin:0 0;">96</div><div class="a" style="left:77px;top:305px;width:1px;height:22px;background:#a0a0a0;"></div><div class="a" style="left:147px;top:305px;width:1px;height:22px;background:#a0a0a0;"></div><div class="a" style="left:239px;top:305px;width:1px;height:22px;background:#a0a0a0;"></div><div class="a" style="left:317px;top:305px;width:1px;height:22px;background:#a0a0a0;"></div><div class="a" style="left:361px;top:305px;width:1px;height:22px;background:#a0a0a0;"></div><div class="a" style="left:436px;top:305px;width:1px;height:22px;background:#a0a0a0;"></div><div class="a" style="left:502px;top:305px;width:1px;height:22px;background:#a0a0a0;"></div><div class="a" style="left:567px;top:305px;width:1px;height:22px;background:#a0a0a0;"></div><div class="a" style="left:631px;top:305px;width:1px;height:22px;background:#a0a0a0;"></div><div class="a" style="left:2px;top:327px;width:691px;height:1px;background:#a0a0a0;"></div><div class="a" style="left:567.5px;top:328px;width:125.5px;height:21px;background:#008000;"></div><div class="t" style="left:5.30px;top:329.19px;font-size:11px;line-height:20px;color:#000;transform:scaleX(0.9400);transform-origin:0 0;">W1EO</div><div class="t" style="left:90.58px;top:329.19px;font-size:11px;line-height:20px;color:#000;transform:scaleX(0.9850);transform-origin:0 0;">10131.800</div><div class="t" style="left:179.98px;top:329.19px;font-size:11px;line-height:20px;color:#000;transform:scaleX(0.9400);transform-origin:0 0;">V500</div><div class="t" style="left:258.87px;top:329.19px;font-size:11px;line-height:20px;color:#000;transform:scaleX(0.9400);transform-origin:0 0;">FN42IM</div><div class="t" style="left:319.80px;top:329.19px;font-size:11px;line-height:20px;color:#000;transform:scaleX(0.9400);transform-origin:0 0;">00-23</div><div class="t" style="left:364.80px;top:329.19px;font-size:11px;line-height:20px;color:#000;transform:scaleX(0.9400);transform-origin:0 0;">PUBLIC</div><div class="t" style="left:485.08px;top:329.19px;font-size:11px;line-height:20px;color:#000;transform:scaleX(0.9850);transform-origin:0 0;">14</div><div class="t" style="left:524.88px;top:329.19px;font-size:11px;line-height:20px;color:#000;transform:scaleX(0.9850);transform-origin:0 0;">066</div><div class="t" style="left:592.29px;top:329.19px;font-size:11px;line-height:20px;color:#fff;transform:scaleX(0.9850);transform-origin:0 0;">94</div><div class="t" style="left:655.04px;top:329.19px;font-size:11px;line-height:20px;color:#fff;transform:scaleX(0.9850);transform-origin:0 0;">94</div><div class="a" style="left:77px;top:327px;width:1px;height:22px;background:#a0a0a0;"></div><div class="a" style="left:147px;top:327px;width:1px;height:22px;background:#a0a0a0;"></div><div class="a" style="left:239px;top:327px;width:1px;height:22px;background:#a0a0a0;"></div><div class="a" style="left:317px;top:327px;width:1px;height:22px;background:#a0a0a0;"></div><div class="a" style="left:361px;top:327px;width:1px;height:22px;background:#a0a0a0;"></div><div class="a" style="left:436px;top:327px;width:1px;height:22px;background:#a0a0a0;"></div><div class="a" style="left:502px;top:327px;width:1px;height:22px;background:#a0a0a0;"></div><div class="a" style="left:567px;top:327px;width:1px;height:22px;background:#a0a0a0;"></div><div class="a" style="left:631px;top:327px;width:1px;height:22px;background:#a0a0a0;"></div><div class="a" style="left:2px;top:349px;width:691px;height:1px;background:#a0a0a0;"></div><div class="a" style="left:567.5px;top:350px;width:125.5px;height:21px;background:#008000;"></div><div class="t" style="left:5.30px;top:351.19px;font-size:11px;line-height:20px;color:#000;transform:scaleX(0.9400);transform-origin:0 0;">KF1D</div><div class="t" style="left:90.58px;top:351.19px;font-size:11px;line-height:20px;color:#000;transform:scaleX(0.9850);transform-origin:0 0;">10148.000</div><div class="t" style="left:177.16px;top:351.19px;font-size:11px;line-height:20px;color:#000;transform:scaleX(0.9400);transform-origin:0 0;">V2300</div><div class="t" style="left:257.93px;top:351.19px;font-size:11px;line-height:20px;color:#000;transform:scaleX(0.9400);transform-origin:0 0;">FN42FA</div><div class="t" style="left:319.80px;top:351.19px;font-size:11px;line-height:20px;color:#000;transform:scaleX(0.9400);transform-origin:0 0;">00-23</div><div class="t" style="left:364.80px;top:351.19px;font-size:11px;line-height:20px;color:#000;transform:scaleX(0.9400);transform-origin:0 0;">PUBLIC</div><div class="t" style="left:485.08px;top:351.19px;font-size:11px;line-height:20px;color:#000;transform:scaleX(0.9850);transform-origin:0 0;">29</div><div class="t" style="left:524.88px;top:351.19px;font-size:11px;line-height:20px;color:#000;transform:scaleX(0.9850);transform-origin:0 0;">180</div><div class="t" style="left:592.29px;top:351.19px;font-size:11px;line-height:20px;color:#fff;transform:scaleX(0.9850);transform-origin:0 0;">94</div><div class="t" style="left:655.04px;top:351.19px;font-size:11px;line-height:20px;color:#fff;transform:scaleX(0.9850);transform-origin:0 0;">94</div><div class="a" style="left:77px;top:349px;width:1px;height:22px;background:#a0a0a0;"></div><div class="a" style="left:147px;top:349px;width:1px;height:22px;background:#a0a0a0;"></div><div class="a" style="left:239px;top:349px;width:1px;height:22px;background:#a0a0a0;"></div><div class="a" style="left:317px;top:349px;width:1px;height:22px;background:#a0a0a0;"></div><div class="a" style="left:361px;top:349px;width:1px;height:22px;background:#a0a0a0;"></div><div class="a" style="left:436px;top:349px;width:1px;height:22px;background:#a0a0a0;"></div><div class="a" style="left:502px;top:349px;width:1px;height:22px;background:#a0a0a0;"></div><div class="a" style="left:567px;top:349px;width:1px;height:22px;background:#a0a0a0;"></div><div class="a" style="left:631px;top:349px;width:1px;height:22px;background:#a0a0a0;"></div><div class="a" style="left:2px;top:371px;width:691px;height:1px;background:#a0a0a0;"></div><div class="a" style="left:567.5px;top:372px;width:125.5px;height:21px;background:#008000;"></div><div class="t" style="left:5.30px;top:373.19px;font-size:11px;line-height:20px;color:#000;transform:scaleX(0.9400);transform-origin:0 0;">W1EO</div><div class="t" style="left:90.58px;top:373.19px;font-size:11px;line-height:20px;color:#000;transform:scaleX(0.9850);transform-origin:0 0;">14104.200</div><div class="t" style="left:177.16px;top:373.19px;font-size:11px;line-height:20px;color:#000;transform:scaleX(0.9400);transform-origin:0 0;">V2300</div><div class="t" style="left:258.87px;top:373.19px;font-size:11px;line-height:20px;color:#000;transform:scaleX(0.9400);transform-origin:0 0;">FN42IM</div><div class="t" style="left:319.80px;top:373.19px;font-size:11px;line-height:20px;color:#000;transform:scaleX(0.9400);transform-origin:0 0;">00-23</div><div class="t" style="left:364.80px;top:373.19px;font-size:11px;line-height:20px;color:#000;transform:scaleX(0.9400);transform-origin:0 0;">PUBLIC</div><div class="t" style="left:485.08px;top:373.19px;font-size:11px;line-height:20px;color:#000;transform:scaleX(0.9850);transform-origin:0 0;">14</div><div class="t" style="left:524.88px;top:373.19px;font-size:11px;line-height:20px;color:#000;transform:scaleX(0.9850);transform-origin:0 0;">066</div><div class="t" style="left:592.29px;top:373.19px;font-size:11px;line-height:20px;color:#fff;transform:scaleX(0.9850);transform-origin:0 0;">92</div><div class="t" style="left:655.04px;top:373.19px;font-size:11px;line-height:20px;color:#fff;transform:scaleX(0.9850);transform-origin:0 0;">92</div><div class="a" style="left:77px;top:371px;width:1px;height:22px;background:#a0a0a0;"></div><div class="a" style="left:147px;top:371px;width:1px;height:22px;background:#a0a0a0;"></div><div class="a" style="left:239px;top:371px;width:1px;height:22px;background:#a0a0a0;"></div><div class="a" style="left:317px;top:371px;width:1px;height:22px;background:#a0a0a0;"></div><div class="a" style="left:361px;top:371px;width:1px;height:22px;background:#a0a0a0;"></div><div class="a" style="left:436px;top:371px;width:1px;height:22px;background:#a0a0a0;"></div><div class="a" style="left:502px;top:371px;width:1px;height:22px;background:#a0a0a0;"></div><div class="a" style="left:567px;top:371px;width:1px;height:22px;background:#a0a0a0;"></div><div class="a" style="left:631px;top:371px;width:1px;height:22px;background:#a0a0a0;"></div><div class="a" style="left:2px;top:393px;width:691px;height:1px;background:#a0a0a0;"></div><div class="a" style="left:567.5px;top:394px;width:125.5px;height:21px;background:#008000;"></div><div class="t" style="left:5.30px;top:395.19px;font-size:11px;line-height:20px;color:#000;transform:scaleX(0.9400);transform-origin:0 0;">W1EO</div><div class="t" style="left:90.58px;top:395.19px;font-size:11px;line-height:20px;color:#000;transform:scaleX(0.9850);transform-origin:0 0;">21094.500</div><div class="t" style="left:177.16px;top:395.19px;font-size:11px;line-height:20px;color:#000;transform:scaleX(0.9400);transform-origin:0 0;">V2300</div><div class="t" style="left:258.87px;top:395.19px;font-size:11px;line-height:20px;color:#000;transform:scaleX(0.9400);transform-origin:0 0;">FN42IM</div><div class="t" style="left:319.80px;top:395.19px;font-size:11px;line-height:20px;color:#000;transform:scaleX(0.9400);transform-origin:0 0;">00-23</div><div class="t" style="left:364.80px;top:395.19px;font-size:11px;line-height:20px;color:#000;transform:scaleX(0.9400);transform-origin:0 0;">PUBLIC</div><div class="t" style="left:485.08px;top:395.19px;font-size:11px;line-height:20px;color:#000;transform:scaleX(0.9850);transform-origin:0 0;">14</div><div class="t" style="left:524.88px;top:395.19px;font-size:11px;line-height:20px;color:#000;transform:scaleX(0.9850);transform-origin:0 0;">066</div><div class="t" style="left:592.29px;top:395.19px;font-size:11px;line-height:20px;color:#fff;transform:scaleX(0.9850);transform-origin:0 0;">87</div><div class="t" style="left:655.04px;top:395.19px;font-size:11px;line-height:20px;color:#fff;transform:scaleX(0.9850);transform-origin:0 0;">87</div><div class="a" style="left:77px;top:393px;width:1px;height:22px;background:#a0a0a0;"></div><div class="a" style="left:147px;top:393px;width:1px;height:22px;background:#a0a0a0;"></div><div class="a" style="left:239px;top:393px;width:1px;height:22px;background:#a0a0a0;"></div><div class="a" style="left:317px;top:393px;width:1px;height:22px;background:#a0a0a0;"></div><div class="a" style="left:361px;top:393px;width:1px;height:22px;background:#a0a0a0;"></div><div class="a" style="left:436px;top:393px;width:1px;height:22px;background:#a0a0a0;"></div><div class="a" style="left:502px;top:393px;width:1px;height:22px;background:#a0a0a0;"></div><div class="a" style="left:567px;top:393px;width:1px;height:22px;background:#a0a0a0;"></div><div class="a" style="left:631px;top:393px;width:1px;height:22px;background:#a0a0a0;"></div><div class="a" style="left:2px;top:415px;width:691px;height:1px;background:#a0a0a0;"></div><div class="a" style="left:567.5px;top:416px;width:125.5px;height:21px;background:#008000;"></div><div class="t" style="left:5.30px;top:417.19px;font-size:11px;line-height:20px;color:#000;transform:scaleX(0.9400);transform-origin:0 0;">WA3MEZ</div><div class="t" style="left:96.49px;top:417.19px;font-size:11px;line-height:20px;color:#000;transform:scaleX(0.9850);transform-origin:0 0;">7101.200</div><div class="t" style="left:177.16px;top:417.19px;font-size:11px;line-height:20px;color:#000;transform:scaleX(0.9400);transform-origin:0 0;">V2300</div><div class="t" style="left:257.46px;top:417.19px;font-size:11px;line-height:20px;color:#000;transform:scaleX(0.9400);transform-origin:0 0;">FM19OJ</div><div class="t" style="left:319.80px;top:417.19px;font-size:11px;line-height:20px;color:#000;transform:scaleX(0.9400);transform-origin:0 0;">00-23</div><div class="t" style="left:364.80px;top:417.19px;font-size:11px;line-height:20px;color:#000;transform:scaleX(0.9400);transform-origin:0 0;">PUBLIC</div><div class="t" style="left:479.17px;top:417.19px;font-size:11px;line-height:20px;color:#000;transform:scaleX(0.9850);transform-origin:0 0;">345</div><div class="t" style="left:524.88px;top:417.19px;font-size:11px;line-height:20px;color:#000;transform:scaleX(0.9850);transform-origin:0 0;">234</div><div class="t" style="left:592.29px;top:417.19px;font-size:11px;line-height:20px;color:#fff;transform:scaleX(0.9850);transform-origin:0 0;">73</div><div class="t" style="left:655.04px;top:417.19px;font-size:11px;line-height:20px;color:#fff;transform:scaleX(0.9850);transform-origin:0 0;">51</div><div class="a" style="left:77px;top:415px;width:1px;height:22px;background:#a0a0a0;"></div><div class="a" style="left:147px;top:415px;width:1px;height:22px;background:#a0a0a0;"></div><div class="a" style="left:239px;top:415px;width:1px;height:22px;background:#a0a0a0;"></div><div class="a" style="left:317px;top:415px;width:1px;height:22px;background:#a0a0a0;"></div><div class="a" style="left:361px;top:415px;width:1px;height:22px;background:#a0a0a0;"></div><div class="a" style="left:436px;top:415px;width:1px;height:22px;background:#a0a0a0;"></div><div class="a" style="left:502px;top:415px;width:1px;height:22px;background:#a0a0a0;"></div><div class="a" style="left:567px;top:415px;width:1px;height:22px;background:#a0a0a0;"></div><div class="a" style="left:631px;top:415px;width:1px;height:22px;background:#a0a0a0;"></div><div class="a" style="left:2px;top:437px;width:691px;height:1px;background:#a0a0a0;"></div><div class="a" style="left:567.5px;top:438px;width:125.5px;height:21px;background:#008000;"></div><div class="t" style="left:5.30px;top:439.19px;font-size:11px;line-height:20px;color:#000;transform:scaleX(0.9400);transform-origin:0 0;">N3MEL-11</div><div class="t" style="left:96.49px;top:439.19px;font-size:11px;line-height:20px;color:#000;transform:scaleX(0.9850);transform-origin:0 0;">7082.000</div><div class="t" style="left:179.98px;top:439.19px;font-size:11px;line-height:20px;color:#000;transform:scaleX(0.9400);transform-origin:0 0;">V500</div><div class="t" style="left:256.52px;top:439.19px;font-size:11px;line-height:20px;color:#000;transform:scaleX(0.9400);transform-origin:0 0;">FM29DX</div><div class="t" style="left:319.80px;top:439.19px;font-size:11px;line-height:20px;color:#000;transform:scaleX(0.9400);transform-origin:0 0;">15-19</div><div class="t" style="left:364.80px;top:439.19px;font-size:11px;line-height:20px;color:#000;transform:scaleX(0.9400);transform-origin:0 0;">PUBLIC</div><div class="t" style="left:479.17px;top:439.19px;font-size:11px;line-height:20px;color:#000;transform:scaleX(0.9850);transform-origin:0 0;">275</div><div class="t" style="left:524.88px;top:439.19px;font-size:11px;line-height:20px;color:#000;transform:scaleX(0.9850);transform-origin:0 0;">233</div><div class="t" style="left:592.29px;top:439.19px;font-size:11px;line-height:20px;color:#fff;transform:scaleX(0.9850);transform-origin:0 0;">71</div><div class="t" style="left:655.04px;top:439.19px;font-size:11px;line-height:20px;color:#fff;transform:scaleX(0.9850);transform-origin:0 0;">51</div><div class="a" style="left:77px;top:437px;width:1px;height:22px;background:#a0a0a0;"></div><div class="a" style="left:147px;top:437px;width:1px;height:22px;background:#a0a0a0;"></div><div class="a" style="left:239px;top:437px;width:1px;height:22px;background:#a0a0a0;"></div><div class="a" style="left:317px;top:437px;width:1px;height:22px;background:#a0a0a0;"></div><div class="a" style="left:361px;top:437px;width:1px;height:22px;background:#a0a0a0;"></div><div class="a" style="left:436px;top:437px;width:1px;height:22px;background:#a0a0a0;"></div><div class="a" style="left:502px;top:437px;width:1px;height:22px;background:#a0a0a0;"></div><div class="a" style="left:567px;top:437px;width:1px;height:22px;background:#a0a0a0;"></div><div class="a" style="left:631px;top:437px;width:1px;height:22px;background:#a0a0a0;"></div><div class="a" style="left:2px;top:459px;width:691px;height:1px;background:#a0a0a0;"></div><div class="a" style="left:567.5px;top:460px;width:125.5px;height:21px;background:#008000;"></div><div class="t" style="left:5.30px;top:461.19px;font-size:11px;line-height:20px;color:#000;transform:scaleX(0.9400);transform-origin:0 0;">W3TBG</div><div class="t" style="left:96.49px;top:461.19px;font-size:11px;line-height:20px;color:#000;transform:scaleX(0.9850);transform-origin:0 0;">7098.700</div><div class="t" style="left:179.98px;top:461.19px;font-size:11px;line-height:20px;color:#000;transform:scaleX(0.9400);transform-origin:0 0;">V500</div><div class="t" style="left:257.46px;top:461.19px;font-size:11px;line-height:20px;color:#000;transform:scaleX(0.9400);transform-origin:0 0;">FM28FP</div><div class="t" style="left:319.80px;top:461.19px;font-size:11px;line-height:20px;color:#000;transform:scaleX(0.9400);transform-origin:0 0;">00-23</div><div class="t" style="left:364.80px;top:461.19px;font-size:11px;line-height:20px;color:#000;transform:scaleX(0.9400);transform-origin:0 0;">PUBLIC</div><div class="t" style="left:479.17px;top:461.19px;font-size:11px;line-height:20px;color:#000;transform:scaleX(0.9850);transform-origin:0 0;">336</div><div class="t" style="left:524.88px;top:461.19px;font-size:11px;line-height:20px;color:#000;transform:scaleX(0.9850);transform-origin:0 0;">220</div><div class="t" style="left:592.29px;top:461.19px;font-size:11px;line-height:20px;color:#fff;transform:scaleX(0.9850);transform-origin:0 0;">73</div><div class="t" style="left:655.04px;top:461.19px;font-size:11px;line-height:20px;color:#fff;transform:scaleX(0.9850);transform-origin:0 0;">51</div><div class="a" style="left:77px;top:459px;width:1px;height:22px;background:#a0a0a0;"></div><div class="a" style="left:147px;top:459px;width:1px;height:22px;background:#a0a0a0;"></div><div class="a" style="left:239px;top:459px;width:1px;height:22px;background:#a0a0a0;"></div><div class="a" style="left:317px;top:459px;width:1px;height:22px;background:#a0a0a0;"></div><div class="a" style="left:361px;top:459px;width:1px;height:22px;background:#a0a0a0;"></div><div class="a" style="left:436px;top:459px;width:1px;height:22px;background:#a0a0a0;"></div><div class="a" style="left:502px;top:459px;width:1px;height:22px;background:#a0a0a0;"></div><div class="a" style="left:567px;top:459px;width:1px;height:22px;background:#a0a0a0;"></div><div class="a" style="left:631px;top:459px;width:1px;height:22px;background:#a0a0a0;"></div><div class="a" style="left:2px;top:481px;width:691px;height:1px;background:#a0a0a0;"></div><div class="a" style="left:567.5px;top:482px;width:125.5px;height:21px;background:#008000;"></div><div class="t" style="left:5.30px;top:483.19px;font-size:11px;line-height:20px;color:#000;transform:scaleX(0.9400);transform-origin:0 0;">KB3PCY</div><div class="t" style="left:96.49px;top:483.19px;font-size:11px;line-height:20px;color:#000;transform:scaleX(0.9850);transform-origin:0 0;">7107.250</div><div class="t" style="left:179.98px;top:483.19px;font-size:11px;line-height:20px;color:#000;transform:scaleX(0.9400);transform-origin:0 0;">V500</div><div class="t" style="left:256.99px;top:483.19px;font-size:11px;line-height:20px;color:#000;transform:scaleX(0.9400);transform-origin:0 0;">FM29EV</div><div class="t" style="left:319.80px;top:483.19px;font-size:11px;line-height:20px;color:#000;transform:scaleX(0.9400);transform-origin:0 0;">00-23</div><div class="t" style="left:364.80px;top:483.19px;font-size:11px;line-height:20px;color:#000;transform:scaleX(0.9400);transform-origin:0 0;">PUBLIC</div><div class="t" style="left:479.17px;top:483.19px;font-size:11px;line-height:20px;color:#000;transform:scaleX(0.9850);transform-origin:0 0;">275</div><div class="t" style="left:524.88px;top:483.19px;font-size:11px;line-height:20px;color:#000;transform:scaleX(0.9850);transform-origin:0 0;">232</div><div class="t" style="left:592.29px;top:483.19px;font-size:11px;line-height:20px;color:#fff;transform:scaleX(0.9850);transform-origin:0 0;">71</div><div class="t" style="left:655.04px;top:483.19px;font-size:11px;line-height:20px;color:#fff;transform:scaleX(0.9850);transform-origin:0 0;">51</div><div class="a" style="left:77px;top:481px;width:1px;height:22px;background:#a0a0a0;"></div><div class="a" style="left:147px;top:481px;width:1px;height:22px;background:#a0a0a0;"></div><div class="a" style="left:239px;top:481px;width:1px;height:22px;background:#a0a0a0;"></div><div class="a" style="left:317px;top:481px;width:1px;height:22px;background:#a0a0a0;"></div><div class="a" style="left:361px;top:481px;width:1px;height:22px;background:#a0a0a0;"></div><div class="a" style="left:436px;top:481px;width:1px;height:22px;background:#a0a0a0;"></div><div class="a" style="left:502px;top:481px;width:1px;height:22px;background:#a0a0a0;"></div><div class="a" style="left:567px;top:481px;width:1px;height:22px;background:#a0a0a0;"></div><div class="a" style="left:631px;top:481px;width:1px;height:22px;background:#a0a0a0;"></div><div class="a" style="left:693px;top:80px;width:19px;height:418px;background:#f0f0f0;"></div><div class="a" style="left:702px;top:97px;width:2px;height:17px;background:#858585;"></div><div class="a" style="left:0px;top:496.5px;width:712px;height:1.5px;background:#1a1a1a;"></div><div class="a" style="left:711px;top:78px;width:1px;height:420px;background:#2a2a2a;"></div></div><div class="a" style="left:131px;top:260px;width:712px;height:498px;border-radius:8px 8px 0 0;border:1px solid rgba(0,0,0,.25);border-bottom:none"></div></body></html>
